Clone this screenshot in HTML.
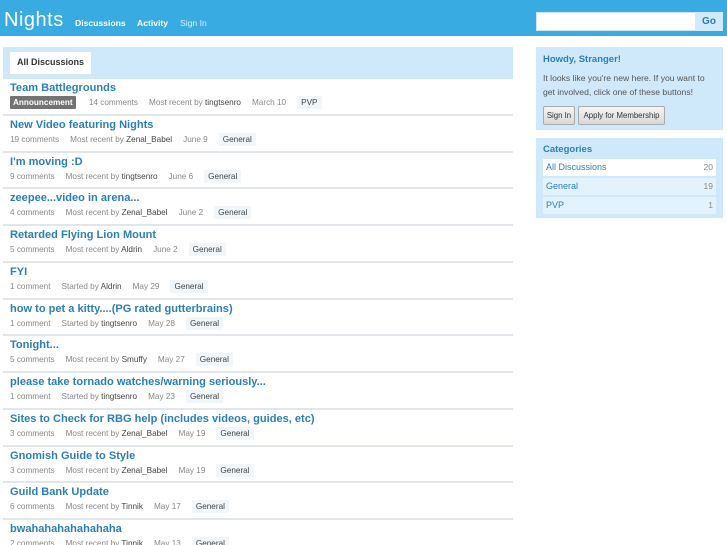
<!DOCTYPE html>
<html><head><style>
*{margin:0;padding:0;box-sizing:border-box}
html,body{width:727px;height:545px;overflow:hidden}
body{background:#fff;font-family:"Liberation Sans",sans-serif;position:relative}
#hd{position:absolute;left:0;top:0;width:727px;height:36px;background:#38abe2}
#logo{position:absolute;left:4px;top:9px;color:#fff;font-size:20px;letter-spacing:0.5px}
.nav{position:absolute;top:18px;font-size:8.6px;color:#fff;font-weight:bold}
#search{position:absolute;left:536px;top:12px;width:160px;height:19px;background:#fff;border:1px solid #cfe6f7}
#go{position:absolute;left:695px;top:12px;width:28px;height:19px;background:#d2ebfc;color:#2a7ab8;font-weight:bold;font-size:10px;text-align:center;line-height:19px}
#tabs{position:absolute;left:3px;top:47px;width:510px;height:32px;background:#cfe9fb}
#tab{position:absolute;left:7px;top:5px;width:81px;height:22px;background:#fff;font-size:9px;font-weight:bold;color:#333;text-align:center;line-height:21px}
.row{position:absolute;left:3px;width:510px;height:36.75px;border-bottom:2px solid #e0e6ea}
.t{position:absolute;left:7px;top:3px;font-size:11.4px;font-weight:bold;color:#2b7fb8;white-space:nowrap;transform:scaleX(0.97);transform-origin:left}
.m{position:absolute;left:7px;top:19px;font-size:8.2px;color:#888;white-space:nowrap}
.m span{margin-right:11px}
.m b{font-weight:normal;color:#444}
.c{background:#f0f6fa;color:#444;padding:2px 4px}
.ann{background:#737373;color:#fff;font-weight:bold;padding:2px 3px;border-radius:1px;margin-right:11px!important}
.box{position:absolute;left:536px;width:187px;background:#cfe9fb}
h3{font-size:9.5px;color:#2b7fb8;font-weight:bold}
.btn{position:absolute;top:59px;height:19px;background:linear-gradient(#f5f5f5,#d8d8d8);border:1px solid #aaa;border-radius:2px;font-size:7.8px;color:#333;line-height:17px;text-align:center}
.cat{position:absolute;left:7px;width:173px;height:17px;font-size:9px;color:#2b7fb8;line-height:16px;padding-left:3px}
.cat i{font-style:normal;color:#888;float:right;padding-right:3px;font-size:8.5px}
</style></head><body>
<div id="hd">
<div id="logo">Nights</div>
<div class="nav" style="left:75px">Discussions</div>
<div class="nav" style="left:137px">Activity</div>
<div class="nav" style="left:180px;font-weight:normal;color:#d7eefb">Sign In</div>
<div id="search"></div><div id="go">Go</div>
</div>
<div id="tabs"><div id="tab">All Discussions</div></div>

<div class="row" style="top:79px"><div class="t">Team Battlegrounds</div><div class="m"><span class="ann">Announcement</span> <span>14 comments</span><span>Most recent by <b>tingtsenro</b></span><span>March 10</span><span class="c">PVP</span></div></div>
<div class="row" style="top:115.75px"><div class="t">New Video featuring Nights</div><div class="m"><span>19 comments</span><span>Most recent by <b>Zenal_Babel</b></span><span>June 9</span><span class="c">General</span></div></div>
<div class="row" style="top:152.5px"><div class="t">I'm moving :D</div><div class="m"><span>9 comments</span><span>Most recent by <b>tingtsenro</b></span><span>June 6</span><span class="c">General</span></div></div>
<div class="row" style="top:189.25px"><div class="t">zeepee...video in arena...</div><div class="m"><span>4 comments</span><span>Most recent by <b>Zenal_Babel</b></span><span>June 2</span><span class="c">General</span></div></div>
<div class="row" style="top:226px"><div class="t">Retarded Flying Lion Mount</div><div class="m"><span>5 comments</span><span>Most recent by <b>Aldrin</b></span><span>June 2</span><span class="c">General</span></div></div>
<div class="row" style="top:262.75px"><div class="t">FYI</div><div class="m"><span>1 comment</span><span>Started by <b>Aldrin</b></span><span>May 29</span><span class="c">General</span></div></div>
<div class="row" style="top:299.5px"><div class="t">how to pet a kitty....(PG rated gutterbrains)</div><div class="m"><span>1 comment</span><span>Started by <b>tingtsenro</b></span><span>May 28</span><span class="c">General</span></div></div>
<div class="row" style="top:336.25px"><div class="t">Tonight...</div><div class="m"><span>5 comments</span><span>Most recent by <b>Smuffy</b></span><span>May 27</span><span class="c">General</span></div></div>
<div class="row" style="top:373px"><div class="t">please take tornado watches/warning seriously...</div><div class="m"><span>1 comment</span><span>Started by <b>tingtsenro</b></span><span>May 23</span><span class="c">General</span></div></div>
<div class="row" style="top:409.75px"><div class="t">Sites to Check for RBG help (includes videos, guides, etc)</div><div class="m"><span>3 comments</span><span>Most recent by <b>Zenal_Babel</b></span><span>May 19</span><span class="c">General</span></div></div>
<div class="row" style="top:446.5px"><div class="t">Gnomish Guide to Style</div><div class="m"><span>3 comments</span><span>Most recent by <b>Zenal_Babel</b></span><span>May 19</span><span class="c">General</span></div></div>
<div class="row" style="top:483.25px"><div class="t">Guild Bank Update</div><div class="m"><span>6 comments</span><span>Most recent by <b>Tinnik</b></span><span>May 17</span><span class="c">General</span></div></div>
<div class="row" style="top:520px"><div class="t">bwahahahahahahaha</div><div class="m"><span>2 comments</span><span>Most recent by <b>Tinnik</b></span><span>May 13</span><span class="c">General</span></div></div>

<div class="box" style="top:47px;height:83px">
<h3 style="position:absolute;left:7px;top:7px">Howdy, Stranger!</h3>
<div style="position:absolute;left:7px;top:24px;font-size:8.6px;color:#555;line-height:14px;width:174px">It looks like you're new here. If you want to get involved, click one of these buttons!</div>
<div class="btn" style="left:7px;width:32px">Sign In</div>
<div class="btn" style="left:42px;width:87px">Apply for Membership</div>
</div>
<div class="box" style="top:138px;height:80px">
<h3 style="position:absolute;left:7px;top:6px">Categories</h3>
<div class="cat" style="top:21px;background:#fff">All Discussions<i>20</i></div>
<div class="cat" style="top:40px;background:#e3f3fd">General<i>19</i></div>
<div class="cat" style="top:59px;background:#e3f3fd">PVP<i>1</i></div>
</div>
</body></html>
